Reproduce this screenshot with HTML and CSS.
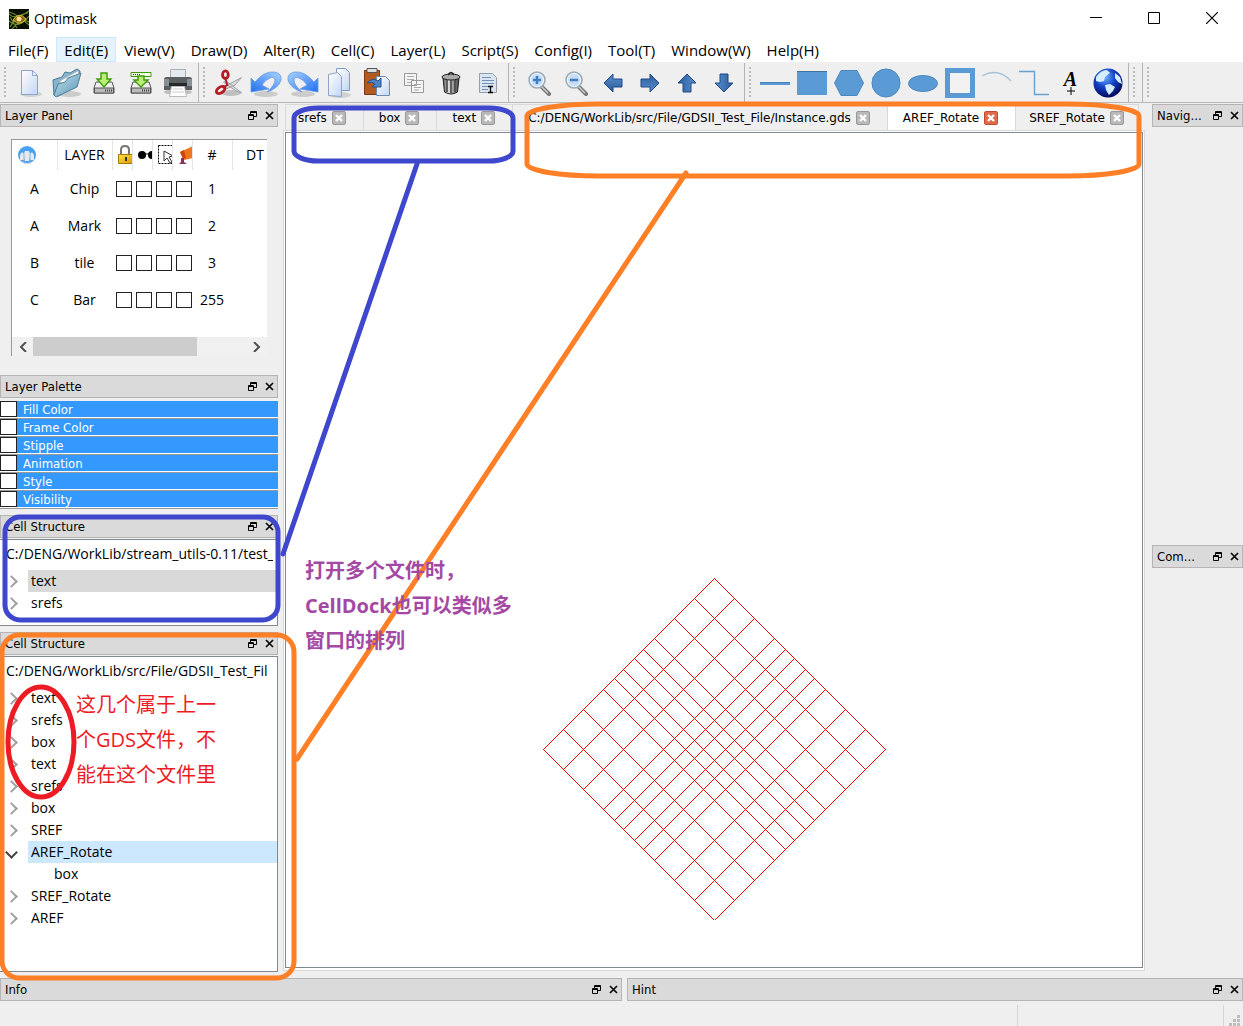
FILE: index.html
```html
<!DOCTYPE html>
<html lang="en">
<head>
<meta charset="utf-8">
<meta name="viewport" content="width=device-width, initial-scale=1">
<title>Optimask</title>
<link rel="stylesheet" href="styles.css">
</head>
<body>
<svg class="defs" width="0" height="0" aria-hidden="true">
  <defs>
    <linearGradient id="paper" x1="0" y1="0" x2="1" y2="1"><stop offset="0" stop-color="#fff"/><stop offset="1" stop-color="#c3d6f3"/></linearGradient>
    <linearGradient id="folder" x1="0" y1="0" x2="1" y2="1"><stop offset="0" stop-color="#c4e2ee"/><stop offset="1" stop-color="#5795b4"/></linearGradient>
    <linearGradient id="blue" x1="1" y1="0" x2="0" y2="1"><stop offset="0" stop-color="#a9d4ff"/><stop offset="1" stop-color="#1f6ff0"/></linearGradient>
    <linearGradient id="arrow" x1="0" y1="0" x2="0" y2="1"><stop offset="0" stop-color="#5b8fcb"/><stop offset="1" stop-color="#2a5c9e"/></linearGradient>
    <linearGradient id="metal" x1="0" y1="0" x2="1" y2="0"><stop offset="0" stop-color="#555"/><stop offset=".35" stop-color="#ddd"/><stop offset="1" stop-color="#444"/></linearGradient>
    <linearGradient id="gold" x1="0" y1="0" x2="1" y2="1"><stop offset="0" stop-color="#ffe14a"/><stop offset="1" stop-color="#d99a00"/></linearGradient>
    <radialGradient id="globe" cx=".4" cy=".3" r=".7"><stop offset="0" stop-color="#6fb4ff"/><stop offset=".5" stop-color="#1140c4"/><stop offset="1" stop-color="#020a5e"/></radialGradient>
    <symbol id="i-float" viewBox="0 0 9 9"><path d="M2.500 3V.5h6v5H6M2.500 1.500h6M.5 3.500h5v5h-5zM.5 4.500h5" fill="none" stroke="#000"/></symbol>
    <symbol id="i-close" viewBox="0 0 9 9"><path d="M1 1l7 7M8 1L1 8" fill="none" stroke="#000" stroke-width="1.600"/></symbol>
    <symbol id="i-x" viewBox="0 0 12 12"><path d="M3 3l6 6M9 3l-6 6" fill="none" stroke="#fff" stroke-width="2.400"/></symbol>
    <symbol id="i-arrow" viewBox="0 0 20 20"><path d="M1 10l9-9v5h9v8h-9v5z" fill="url(#arrow)" stroke="#204a87"/></symbol>
    <symbol id="i-undo" viewBox="0 0 32 32"><ellipse cx="16" cy="27" rx="12" ry="3" fill="#000" opacity=".15"/><path d="M1 11l4 4Q14 4 24 5q8 1 7 8-2 8-14 12 8-7 8-12-1-4-5-2-5 2-8 7l7 4-18 3z" fill="url(#blue)" stroke="#6b9be6" stroke-width=".8"/></symbol>
    <symbol id="i-lens" viewBox="0 0 26 26"><path d="M15 16l8 8" stroke="#777" stroke-width="4" stroke-linecap="round"/><path d="M15 16l7 7" stroke="#ccc" stroke-width="1.500"/><circle cx="11" cy="10" r="8" fill="#c6dcf5" stroke="#9aa9b6" stroke-width="1.500"/><circle cx="11" cy="10" r="6.500" fill="none" stroke="#f4f9ff"/></symbol>
    <symbol id="i-disk" viewBox="0 0 24 24"><path d="M4 11h16l2 6v5H2v-5z" fill="#eee" stroke="#555"/><path d="M2.500 17h19v5h-19z" fill="#bbb" stroke="#555"/><path d="M13 19.500h7" stroke="#444" stroke-width="2" stroke-dasharray="1 1"/></symbol>
  </defs>
</svg>

<header class="titlebar">
  <svg class="appicon" viewBox="0 0 20 20" aria-hidden="true"><path d="M0 0h20v20H0z" fill="#0a0f04"/><path d="M0 5q6 7 20-3M0 3q8 2 20 13M1 18q8-14 18-14M0 12q9 9 20-5M3 20Q13 8 20 13M1 8l7 11" fill="none" stroke="#6f942b" stroke-width="1.100"/><path d="M4 11q6-9 13-1-6 8-13 1z" fill="#96611b" stroke="#d5c73e"/><circle cx="10" cy="10" r="2.500" fill="#ffe68a"/></svg>
  <h1>Optimask</h1>
  <div class="wincontrols">
    <button aria-label="Minimize"><svg width="12" height="12"><path d="M0 5.500h12" stroke="#000"/></svg></button>
    <button aria-label="Maximize"><svg width="12" height="12"><path d="M.5.5h11v11H.5z" fill="none" stroke="#000"/></svg></button>
    <button aria-label="Close"><svg width="12" height="12"><path d="M0 0l12 12M12 0L0 12" stroke="#000" stroke-width="1.200"/></svg></button>
  </div>
</header>

<nav class="menubar">
  <button>File(F)</button><button class="hot">Edit(E)</button><button>View(V)</button><button>Draw(D)</button><button>Alter(R)</button><button>Cell(C)</button><button>Layer(L)</button><button>Script(S)</button><button>Config(I)</button><button>Tool(T)</button><button>Window(W)</button><button>Help(H)</button>
</nav>

<div class="toolbar">
  <div class="group">
    <button aria-label="New"><svg width="32" height="32"><ellipse cx="17" cy="27" rx="11" ry="3" fill="#000" opacity=".12"/><path d="M7.500 3.500h11l5 5v19h-16z" fill="url(#paper)" stroke="#8ea3c9"/><path d="M18.500 3.500v5h5z" fill="#fff" stroke="#8ea3c9"/></svg></button>
    <button aria-label="Open"><svg width="32" height="32"><ellipse cx="18" cy="27" rx="12" ry="3" fill="#000" opacity=".15"/><path d="M2 13l9-3 3-5 5 1 7-4 3 2-1 7L8 29l-5-1z" fill="#85b5cd" stroke="#4c7a92"/><path d="M9 14L27 4l1 5L10 22z" fill="#fff" stroke="#bbb"/><path d="M3 28l4-11 7-2 3-4 13-5-4 14L5 30z" fill="url(#folder)" stroke="#4c7f99"/></svg></button>
    <button aria-label="Save"><svg width="24" height="24"><use href="#i-disk"/><path d="M9 2h6v6h4l-7 8-7-8h4z" fill="#b9ef78" stroke="#3f9a0a" stroke-width="1.400"/></svg></button>
    <button aria-label="Save as"><svg width="24" height="24"><use href="#i-disk"/><path d="M2 1.500h20v4H2z" fill="#f4ffe8" stroke="#3f9a0a"/><path d="M4 3.500h7" stroke="#333" stroke-dasharray="1 1"/><path d="M9 5h6v4h4l-7 7-7-7h4z" fill="#b9ef78" stroke="#3f9a0a" stroke-width="1.400"/></svg></button>
    <button aria-label="Print"><svg width="32" height="32"><ellipse cx="16" cy="25" rx="14" ry="3" fill="#000" opacity=".2"/><path d="M8.500 2.500h15v9h-15z" fill="#e3e9ee" stroke="#a9afb5"/><path d="M2 12q0-2 3-2h22q3 0 3 2v11H2z" fill="#5a5f62"/><path d="M2 16h28v3H2z" fill="#24282a"/><path d="M2 12h5v7H2zM25 12h5v7h-5z" fill="#899094"/><path d="M9.500 19.500h13l2 10h-17z" fill="#fff" stroke="#bbb"/><path d="M11 22h10M10 25h12" stroke="#ccc"/></svg></button>
  </div>
  <div class="group">
    <button aria-label="Cut"><svg width="32" height="32"><ellipse cx="18" cy="26" rx="10" ry="3" fill="#000" opacity=".2"/><g transform="translate(1 2) scale(.95)"><path d="M12 12l17 13-6-2L10 14zM12 18L29 9l-7 8-9 4z" fill="#d8dadd" stroke="#9a9da2"/><ellipse cx="12" cy="6" rx="3" ry="4" fill="none" stroke="#b51b25" stroke-width="3"/><ellipse cx="7" cy="22" rx="5" ry="3" fill="none" stroke="#b51b25" stroke-width="3" transform="rotate(-35 7 22)"/><path d="M12 10l2 7-5 3" fill="none" stroke="#b51b25" stroke-width="2"/></g></svg></button>
    <button aria-label="Undo"><svg width="32" height="32"><use href="#i-undo"/></svg></button>
    <button aria-label="Redo"><svg width="32" height="32"><use href="#i-undo" transform="translate(32 0) scale(-1 1)"/></svg></button>
    <button aria-label="Copy"><svg width="32" height="32"><ellipse cx="16" cy="28" rx="11" ry="3" fill="#000" opacity=".12"/><path d="M12.500 1.500h9l4 4v18h-13z" fill="url(#paper)" stroke="#7f9acb"/><path d="M4.500 7.500l9-2 4 4v20l-13-1z" fill="url(#paper)" stroke="#8ea3c9"/></svg></button>
    <button aria-label="Paste"><svg width="32" height="32"><path d="M3.500 3.500h15v24h-15z" fill="#b35a20" stroke="#7c3a10"/><path d="M6 1.500h10v4H6z" fill="#ddd" stroke="#555"/><path d="M15.500 9.500h9l4 4v15h-13z" fill="url(#paper)" stroke="#6f8cb8"/><path d="M6 16q5-6 11-2l3-3v9h-9l3-3q-3-3-8-1z" fill="#4d83c8" stroke="#28528f"/></svg></button>
    <button aria-label="Duplicate"><svg width="22" height="22"><path d="M1.500 1.500h12v12h-12zM8.500 8.500h12v12h-12z" fill="#f5f5f5" stroke="#999"/><path d="M4 4.500h7M4 7.500h7M4 10.500h4M11 12.500h7M11 15.500h7M11 18h5" stroke="#aaa"/></svg></button>
    <button aria-label="Delete"><svg width="22" height="24"><path d="M3 7h16l-1.500 14q-6.500 4-13 0z" fill="url(#metal)" stroke="#222"/><path d="M7 9v12M11 9v13M15 9v12" stroke="#444" stroke-width="1.500"/><ellipse cx="11" cy="6" rx="9" ry="3" fill="#aaa" stroke="#222"/><path d="M8 4q3-5 6 0" fill="none" stroke="#222" stroke-width="1.500"/></svg></button>
    <button aria-label="Select text"><svg width="22" height="24"><path d="M2.500 2.500h13l4 4v15h-17z" fill="#dbe5f1" stroke="#93a0ac"/><path d="M5 6.500h9M5 9.500h12M5 12.500h12M5 15.500h6M5 18.500h6" stroke="#7192b8"/><path d="M11 15.500h5M11 21.500h5M13.500 15v7" stroke="#000" stroke-width="1.300"/></svg></button>
  </div>
  <div class="group">
    <button aria-label="Zoom in"><svg width="26" height="26"><use href="#i-lens"/><path d="M7 10h8M11 6v8" stroke="#3f7cc0" stroke-width="2.500"/></svg></button>
    <button aria-label="Zoom out"><svg width="26" height="26"><use href="#i-lens"/><path d="M7 10h8" stroke="#3f7cc0" stroke-width="2.500"/></svg></button>
    <button aria-label="Left"><svg width="20" height="20"><use href="#i-arrow"/></svg></button>
    <button aria-label="Right"><svg width="20" height="20"><use href="#i-arrow" transform="rotate(180 10 10)"/></svg></button>
    <button aria-label="Up"><svg width="20" height="20"><use href="#i-arrow" transform="rotate(90 10 10)"/></svg></button>
    <button aria-label="Down"><svg width="20" height="20"><use href="#i-arrow" transform="rotate(270 10 10)"/></svg></button>
  </div>
  <div class="group">
    <button aria-label="Line"><svg width="30" height="30"><path d="M0 15.500h30" stroke="#5b9bd5" stroke-width="3"/><path d="M0 14.500h30" stroke="#4682b8"/></svg></button>
    <button aria-label="Rectangle"><svg width="30" height="30"><path d="M0 3h30v24H0z" fill="#5b9bd5"/><path d="M0 3.500h30" stroke="#41719c"/></svg></button>
    <button aria-label="Polygon"><svg width="30" height="30"><path d="M7 2.500h16L29.500 15 23 27.500H7L.5 15z" fill="#5b9bd5" stroke="#4d86bb"/></svg></button>
    <button aria-label="Circle"><svg width="30" height="30"><circle cx="15" cy="15" r="14" fill="#5b9bd5" stroke="#4d86bb"/></svg></button>
    <button aria-label="Ellipse"><svg width="30" height="30"><ellipse cx="15" cy="15.500" rx="14.500" ry="8" fill="#5b9bd5" stroke="#4d86bb"/></svg></button>
    <button aria-label="Frame"><svg width="30" height="30"><path d="M2.500 2.500h25v25h-25z" fill="#f2f2f2" stroke="#5b9bd5" stroke-width="5"/></svg></button>
    <button aria-label="Arc"><svg width="30" height="30"><path d="M0 8Q16-1 29 13" fill="none" stroke="#a5c3df" stroke-width="1.300"/></svg></button>
    <button aria-label="Path"><svg width="30" height="30"><path d="M0 3.500h15.500v23H30" fill="none" stroke="#6aa0cf" stroke-width="1.400"/></svg></button>
    <button aria-label="Text" class="texttool"><b>A</b><svg width="8" height="8"><path d="M4 0v8M0 4h8" stroke="#000"/></svg></button>
    <button aria-label="Globe"><svg width="30" height="30"><circle cx="15" cy="15" r="14.500" fill="url(#globe)"/><path d="M3 9q5-7 11-7l3 3-5 4-1 4-4 1-4-1zM12 17l5-1 5 3-2 4-4 4-3-5zM22 5l5 4 2 7-4-2-3-4z" fill="#d5edff"/></svg></button>
  </div>
  <div class="group"></div>
  <div class="group last"></div>
</div>

<main class="workspace">
  <aside class="dock left">
    <section>
      <header class="dockhead"><h2>Layer Panel</h2><button aria-label="Float"><svg><use href="#i-float"/></svg></button><button aria-label="Close"><svg><use href="#i-close"/></svg></button></header>
      <div class="layers">
        <div class="tablewrap">
        <table>
          <colgroup><col class="c-user"><col class="c-name"><col class="c-box"><col class="c-box"><col class="c-box"><col class="c-box"><col class="c-num"><col class="c-dt"></colgroup>
          <thead><tr>
            <th class="people"><svg width="18" height="18" aria-label="User"><circle cx="9" cy="9" r="9" fill="#49a1f2"/><path d="M1 13q8 8 16 0-3 5-8 5t-8-5z" fill="#ddd"/><path d="M2 14V9l2-3 2 2 1-3h4l1 3 2-2 2 3v5h-4v-3l-1 4H7l-1-4v3z" fill="#e6eaf0"/><path d="M6 8v7M12 8v7" stroke="#8fb5dd"/></svg></th>
            <th>LAYER</th>
            <th><svg width="16" height="20" aria-label="Lock"><path d="M4 10V5q0-4 4-4t4 4v5" fill="none" stroke="#77756e" stroke-width="2"/><path d="M1.500 9.500h14v9h-14z" fill="url(#gold)" stroke="#a87800"/><path d="M9 12v4" stroke="#333" stroke-width="2"/></svg></th>
            <th><svg width="16" height="20" aria-label="Visible"><circle cx="5" cy="10" r="4"/><circle cx="15" cy="10" r="4"/><path d="M5 9h10" stroke="#000"/></svg></th>
            <th><svg width="16" height="20" aria-label="Selectable"><path d="M1.500.5h16M1.500 18.500h16M1.500.5v18" fill="none" stroke="#000" stroke-dasharray="2 1"/><path d="M7 6l9 5-4 1 3 5-2 1-3-5-3 3z" fill="#fff" stroke="#333"/></svg></th>
            <th><svg width="16" height="20" aria-label="Fill"><path d="M3 7l13-6v12l-9 2z" fill="#ed7621"/><path d="M3 7l3 7 3-1-2-8z" fill="#d4450b"/><path d="M4 13h3v4l3 2H2l2-2z" fill="#8a2f59"/></svg></th>
            <th>#</th><th>DT</th>
          </tr></thead>
          <tbody>
            <tr><td>A</td><td>Chip</td><td><input type="checkbox" aria-label="Chip locked"></td><td><input type="checkbox" aria-label="Chip visible"></td><td><input type="checkbox" aria-label="Chip selectable"></td><td><input type="checkbox" aria-label="Chip filled"></td><td>1</td><td></td></tr>
            <tr><td>A</td><td>Mark</td><td><input type="checkbox" aria-label="Mark locked"></td><td><input type="checkbox" aria-label="Mark visible"></td><td><input type="checkbox" aria-label="Mark selectable"></td><td><input type="checkbox" aria-label="Mark filled"></td><td>2</td><td></td></tr>
            <tr><td>B</td><td>tile</td><td><input type="checkbox" aria-label="tile locked"></td><td><input type="checkbox" aria-label="tile visible"></td><td><input type="checkbox" aria-label="tile selectable"></td><td><input type="checkbox" aria-label="tile filled"></td><td>3</td><td></td></tr>
            <tr><td>C</td><td>Bar</td><td><input type="checkbox" aria-label="Bar locked"></td><td><input type="checkbox" aria-label="Bar visible"></td><td><input type="checkbox" aria-label="Bar selectable"></td><td><input type="checkbox" aria-label="Bar filled"></td><td>255</td><td></td></tr>
          </tbody>
        </table>
        </div>
        <div class="scroll">
          <button aria-label="Scroll left"><svg width="8" height="10"><path d="M7 0L2 5l5 5" fill="none" stroke="#505050" stroke-width="2"/></svg></button>
          <span class="track"><span class="thumb"></span></span>
          <button aria-label="Scroll right"><svg width="8" height="10"><path d="M1 0l5 5-5 5" fill="none" stroke="#505050" stroke-width="2"/></svg></button>
        </div>
      </div>
    </section>
    <section>
      <header class="dockhead"><h2>Layer Palette</h2><button aria-label="Float"><svg><use href="#i-float"/></svg></button><button aria-label="Close"><svg><use href="#i-close"/></svg></button></header>
      <div class="palette">
        <label><input type="checkbox"><span>Fill Color</span></label>
        <label><input type="checkbox"><span>Frame Color</span></label>
        <label><input type="checkbox"><span>Stipple</span></label>
        <label><input type="checkbox"><span>Animation</span></label>
        <label><input type="checkbox"><span>Style</span></label>
        <label><input type="checkbox"><span>Visibility</span></label>
      </div>
    </section>
    <section>
      <header class="dockhead"><h2>Cell Structure</h2><button aria-label="Float"><svg><use href="#i-float"/></svg></button><button aria-label="Close"><svg><use href="#i-close"/></svg></button></header>
      <div class="tree short">
        <p>C:/DENG/WorkLib/stream_utils-0.11/test_</p>
        <ul>
          <li class="closed gray"><span>text</span></li>
          <li class="closed"><span>srefs</span></li>
        </ul>
      </div>
    </section>
    <section class="grow">
      <header class="dockhead"><h2>Cell Structure</h2><button aria-label="Float"><svg><use href="#i-float"/></svg></button><button aria-label="Close"><svg><use href="#i-close"/></svg></button></header>
      <div class="tree">
        <p>C:/DENG/WorkLib/src/File/GDSII_Test_Fil</p>
        <ul>
          <li class="closed"><span>text</span></li>
          <li class="closed"><span>srefs</span></li>
          <li class="closed"><span>box</span></li>
          <li class="closed"><span>text</span></li>
          <li class="closed"><span>srefs</span></li>
          <li class="closed"><span>box</span></li>
          <li class="closed"><span>SREF</span></li>
          <li class="open current"><span>AREF_Rotate</span></li>
          <li class="child"><span>box</span></li>
          <li class="closed"><span>SREF_Rotate</span></li>
          <li class="closed"><span>AREF</span></li>
        </ul>
      </div>
    </section>
  </aside>

  <section class="documents">
    <div class="tabs">
      <div class="tab">srefs<button aria-label="Close srefs"><svg><use href="#i-x"/></svg></button></div>
      <div class="tab">box<button aria-label="Close box"><svg><use href="#i-x"/></svg></button></div>
      <div class="tab">text<button aria-label="Close text"><svg><use href="#i-x"/></svg></button></div>
      <div class="tab">C:/DENG/WorkLib/src/File/GDSII_Test_File/Instance.gds<button aria-label="Close Instance.gds"><svg><use href="#i-x"/></svg></button></div>
      <div class="tab active">AREF_Rotate<button aria-label="Close AREF_Rotate"><svg><use href="#i-x"/></svg></button></div>
      <div class="tab">SREF_Rotate<button aria-label="Close SREF_Rotate"><svg><use href="#i-x"/></svg></button></div>
    </div>
    <div class="pane"><div class="canvas">
      <svg class="drawing" width="343" height="343" viewBox="0 0 343 343" role="img" aria-label="AREF_Rotate layout">
        <g transform="translate(.5 .5)" fill="none" stroke="#f00" shape-rendering="crispEdges">
          <path d="M171 0L0 171M191 20L20 191M211 40L40 211M231 60L60 231M242 71L71 242M251 80L80 251M262 91L91 262M271 100L100 271M282 111L111 282M302 131L131 302M322 151L151 322M342 171L171 342"/>
          <path d="M171 0L342 171M151 20L322 191M131 40L302 211M111 60L282 231M100 71L271 242M91 80L262 251M80 91L251 262M71 100L242 271M60 111L231 282M40 131L211 302M20 151L191 322M0 171L171 342"/>
        </g>
      </svg>
    </div></div>
  </section>

  <aside class="dock right">
    <section class="grow"><header class="dockhead"><h2>Navig...</h2><button aria-label="Float"><svg><use href="#i-float"/></svg></button><button aria-label="Close"><svg><use href="#i-close"/></svg></button></header></section>
    <section class="grow"><header class="dockhead"><h2>Com...</h2><button aria-label="Float"><svg><use href="#i-float"/></svg></button><button aria-label="Close"><svg><use href="#i-close"/></svg></button></header></section>
  </aside>
</main>

<div class="bottom">
  <header class="dockhead"><h2>Info</h2><button aria-label="Float"><svg><use href="#i-float"/></svg></button><button aria-label="Close"><svg><use href="#i-close"/></svg></button></header>
  <header class="dockhead"><h2>Hint</h2><button aria-label="Float"><svg><use href="#i-float"/></svg></button><button aria-label="Close"><svg><use href="#i-close"/></svg></button></header>
</div>
<footer class="statusbar"><span></span><svg width="12" height="12" aria-hidden="true"><path d="M9 1h3v3H9zM5 5h3v3H5zM9 5h3v3H9zM1 9h3v3H1zM5 9h3v3H5zM9 9h3v3H9z" fill="#bdbdbd"/></svg></footer>

<!-- Review markup drawn over the window -->
<svg class="markup" width="1243" height="1026" aria-hidden="true">
  <g fill="none" stroke-width="5" stroke-linecap="round">
    <g stroke="#3f48cc">
      <rect x="294" y="108" width="219" height="53" rx="24" ry="10"/>
      <rect x="5" y="517" width="273" height="103" rx="15"/>
      <path d="M417 164L283 554"/>
    </g>
    <g stroke="#ff7f27">
      <rect x="527" y="104" width="612" height="72" rx="72" ry="12"/>
      <rect x="2" y="635" width="292" height="343" rx="17"/>
      <path d="M686 173L297 759"/>
    </g>
    <ellipse cx="41" cy="742" rx="33" ry="55" stroke="#ed1c24"/>
  </g>
</svg>
<p class="note purple">打开多个文件时，<br>CellDock也可以类似多<br>窗口的排列</p>
<p class="note red">这几个属于上一<br>个GDS文件，不<br>能在这个文件里</p>
</body>
</html>
```
FILE: styles.css
```css
* { box-sizing: border-box; }
body {
  margin: 0; min-height: 100vh; position: relative;
  display: flex; flex-direction: column;
  background: #efefef; color: #000; overflow-x: hidden;
  font: 14px/22px "Open Sans", "Noto Sans", sans-serif;
}
.defs { position: absolute; }
h1, h2, p, ul { margin: 0; padding: 0; font-weight: normal; }
button { margin: 0; padding: 0; border: 0; background: none; font: inherit; color: inherit; }
svg { display: block; flex: none; }
input[type=checkbox] {
  appearance: none; display: block; width: 16px; height: 16px; margin: 0;
  border: 1px solid #222; background: #fff;
}

.titlebar { display: flex; align-items: center; height: 37px; padding: 0 2px 0 9px; gap: 5px; background: #fff; }
.appicon { width: 20px; height: 20px; }
.titlebar h1 { font-size: 14px; flex: 1; }
.wincontrols { display: flex; padding-bottom: 2px; }
.wincontrols button { display: grid; place-items: center; width: 58px; height: 34px; }

.menubar { display: flex; height: 25px; background: #fff; font-size: 15px; }
.menubar button { padding: 0 7px; border: 1px solid transparent; }
.menubar .hot { background: #e5f3ff; border-color: #cce8ff; }

.toolbar { display: flex; height: 41px; border-top: 1px solid #f0f0f0; border-bottom: 1px solid #b8b8b8; }
.group { display: flex; align-items: center; min-width: 14px; padding: 0 2px 0 11px; border-right: 1px solid #b4b4b4; position: relative; }
.group::before {
  content: ""; position: absolute; left: 4px; top: 4px; width: 2px; height: 32px;
  background: repeating-linear-gradient(#bbb 0 2px, transparent 2px 4px);
}
.group.last { flex: 1; border: 0; }
.group button { width: 37px; height: 38px; display: grid; place-items: center; }
.group .texttool { align-content: center; }
.texttool b { font: italic bold 20px/16px "Liberation Serif", serif; }

.workspace { flex: 1; display: flex; padding: 1px 0 6px; }
.dock { display: flex; flex-direction: column; }
.left { width: 278px; gap: 6px; flex: none; }
.right { width: 91px; gap: 14px; flex: none; }
.grow { flex: 1; display: flex; flex-direction: column; }
.dockhead {
  display: flex; align-items: center; height: 23px; padding: 0 3px 0 4px; gap: 8px;
  background: #dadada; border: 1px solid #b5b5b5;
  font: 13px/20px "DejaVu Sans Condensed", "DejaVu Sans", sans-serif;
}
.dockhead h2 { flex: 1; font-size: 13px; }
.dockhead svg { width: 9px; height: 9px; }

.layers { margin: 12px 11px 13px 11px; height: 217px; background: #fff; border-top: 1px solid #999; border-left: 1px solid #999; display: flex; flex-direction: column; }
.tablewrap { flex: 1; overflow: hidden; }
table { table-layout: fixed; border-collapse: collapse; width: 266px; }
.c-user { width: 45px; } .c-name { width: 55px; } .c-box { width: 20px; } .c-num { width: 40px; } .c-dt { width: 46px; }
th, td { padding: 0; text-align: center; font-weight: normal; overflow: hidden; }
th { height: 30px; border-right: 1px solid #e5e5e5; }
th svg { margin-left: 4px; }
.people svg { margin-left: 6px; }
td { height: 37px; }
td input[type=checkbox] { margin-left: 4px; }
.scroll { display: flex; height: 19px; background: #f0f0f0; }
.scroll button { width: 21px; display: grid; place-items: center; }
.track { flex: 1; display: flex; }
.thumb { width: 77%; background: #cdcdcd; }

.palette { margin-top: 3px; }
.palette label { display: flex; height: 18px; background: #fff; border-bottom: 1px solid #999; font: 13px/17px "DejaVu Sans Condensed", "DejaVu Sans", sans-serif; }
.palette span { flex: 1; margin-bottom: 1px; padding-left: 6px; background: #3399ff; color: #fff; }
.palette input[type=checkbox] { width: 17px; }

.tree { margin-top: 1px; flex: 1; background: #fff; border: 1px solid #828790; border-left: 0; }
.tree.short { height: 87px; }
.tree p { height: 30px; line-height: 28px; margin: 0 4px 0 6px; overflow: hidden; white-space: nowrap; }
.tree ul { list-style: none; }
.tree li { display: flex; align-items: center; height: 22px; }
.tree li::before { content: ""; width: 7px; height: 7px; margin: 0 12px 0 7px; flex: none; }
.tree .closed::before { border: solid #a0a0a0; border-width: 2px 2px 0 0; transform: rotate(45deg); }
.tree .open::before { border: solid #404040; border-width: 0 2px 2px 0; transform: rotate(45deg); }
.tree span { flex: 1; padding-left: 3px; }
.tree .child span { padding-left: 28px; }
.gray span { background: #d9d9d9; }
.current span { background: #cce8ff; }

.documents { flex: 1; min-width: 0; margin: 0 7px 1px 5px; display: flex; flex-direction: column; }
.tabs { display: flex; align-items: flex-end; height: 26px; margin: 0 2px; font: 12px/24px "DejaVu Sans", sans-serif; white-space: nowrap; }
.tab { display: flex; align-items: center; height: 26px; gap: 5px; padding: 0 17px 0 15px; border-left: 1px solid #d9d9d9; border-top: 1px solid #d9d9d9; }
.tab:first-child { padding-left: 12px; }
.tab:last-child { border-right: 1px solid #d9d9d9; padding: 0 14px 0 13px; }
.tab.active { background: #fff; }
.tab button { width: 14px; height: 14px; border: 1px solid #999; border-radius: 2px; background: #b9b9b9; display: grid; place-items: center; }
.tab.active button { background: #dd6b4d; border-color: #c4492d; }
.tab button svg { width: 12px; height: 12px; }
.pane { flex: 1; display: flex; padding: 1px 1px 2px; border: 1px solid #d9d9d9; background: #fff; }
.canvas { flex: 1; border: 1px solid #828790; background: #fff; padding: 445px 0 0 257px; }

.bottom { display: grid; grid-template-columns: 622fr 616fr; gap: 5px; }
.statusbar { height: 25px; display: flex; justify-content: flex-end; align-items: flex-end; padding-right: 3px; gap: 4px; }
.statusbar span { width: 207px; height: 21px; border: solid #d5d5d5; border-width: 0 1px; }

.markup { position: absolute; left: 0; top: 0; pointer-events: none; }
.note { position: absolute; font: 20px/35px "Open Sans", "Noto Sans CJK SC", sans-serif; white-space: nowrap; }
.purple { left: 305px; top: 553px; color: #a349a4; font-weight: bold; }
.red { left: 76px; top: 687px; color: #ed1c24; }
```
